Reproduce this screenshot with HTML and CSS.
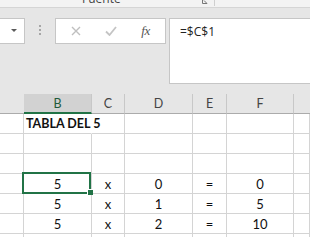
FILE: index.html
```html
<!DOCTYPE html>
<html lang="es">
<head>
<meta charset="utf-8">
<title>Tabla del 5</title>
<link rel="stylesheet" href="styles.css">
</head>
<body>
<div class="ribbon">
  <span class="group-label">Fuente</span>
  <svg class="launcher" width="7" height="5" viewBox="0 0 7 5"><path d="M0.5 0v4.5h4.5" fill="none" stroke="#777" stroke-width="1"/><path d="M2 1.5l3 3" stroke="#777" stroke-width="1"/></svg>
  <span class="rsep"></span>
</div>
<div class="fbar">
  <div class="namebox"><span class="arrow"></span></div>
  <div class="grip"><i></i><i></i><i></i></div>
  <div class="buttons">
    <span class="slot"><svg width="10" height="10" viewBox="0 0 10 10"><path d="M1 1l8 8M9 1l-8 8" stroke="#bfbfbf" stroke-width="1.4" fill="none"/></svg></span>
    <span class="slot"><svg width="12" height="10" viewBox="0 0 12 10"><path d="M1 5.5l3.5 3.5 6.5-8" stroke="#c4c4c4" stroke-width="1.8" fill="none"/></svg></span>
    <span class="slot fx">fx</span>
  </div>
  <div class="formula">=$C$1</div>
</div>
<div class="sheet">
  <div class="hdr">
    <div class="h ha"></div>
    <div class="h hsel">B</div>
    <div class="h">C</div>
    <div class="h">D</div>
    <div class="h">E</div>
    <div class="h">F</div>
    <div class="h hg"></div>
  </div>
  <div class="grid">
    <div class="c"></div><div class="c title">TABLA DEL 5</div><div class="c"></div><div class="c"></div><div class="c"></div><div class="c"></div><div class="c"></div>
    <div class="c"></div><div class="c"></div><div class="c"></div><div class="c"></div><div class="c"></div><div class="c"></div><div class="c"></div>
    <div class="c"></div><div class="c"></div><div class="c"></div><div class="c"></div><div class="c"></div><div class="c"></div><div class="c"></div>
    <div class="c"></div><div class="c sel">5</div><div class="c">x</div><div class="c">0</div><div class="c">=</div><div class="c">0</div><div class="c"></div>
    <div class="c"></div><div class="c">5</div><div class="c">x</div><div class="c">1</div><div class="c">=</div><div class="c">5</div><div class="c"></div>
    <div class="c"></div><div class="c">5</div><div class="c">x</div><div class="c">2</div><div class="c">=</div><div class="c">10</div><div class="c"></div>
    <div class="c"></div><div class="c"></div><div class="c"></div><div class="c"></div><div class="c"></div><div class="c"></div><div class="c"></div>
  </div>
</div>
</body>
</html>
```
FILE: styles.css
```css
body {
  margin: 0;
  width: 310px;
  height: 237px;
  overflow: hidden;
  background: #ffffff;
  font-family: Lato, "Open Sans", sans-serif;
}

.ribbon {
  height: 6px;
  padding-bottom: 1px;
  padding-left: 82px;
  background: #f3f3f3;
  border-bottom: 1px solid #d5d5d5;
  display: flex;
  align-items: flex-end;
  overflow: hidden;
}
.group-label {
  font: 12px/14px "Open Sans", sans-serif;
  color: #444;
  flex-shrink: 0;
}
.launcher {
  flex-shrink: 0;
  margin-left: 81px;
  margin-bottom: 2px;
}
.rsep {
  flex-shrink: 0;
  width: 1px;
  height: 7px;
  margin-left: 5px;
  background: #cfcfcf;
}

.fbar {
  height: 86px;
  box-sizing: border-box;
  padding-top: 10px;
  background: #e6e6e6;
  display: flex;
  align-items: flex-start;
}
.namebox {
  width: 25px;
  height: 26px;
  box-sizing: border-box;
  background: #fff;
  border: 1px solid #c6c6c6;
  border-left: none;
  display: flex;
  align-items: center;
  justify-content: flex-end;
  padding-right: 7px;
}
.arrow {
  width: 0;
  height: 0;
  border-left: 3px solid transparent;
  border-right: 3px solid transparent;
  border-top: 3px solid #5a5a5a;
  margin-top: -1px;
}
.grip {
  width: 30px;
  padding-top: 7px;
  display: flex;
  flex-direction: column;
  align-items: center;
  gap: 2px;
}
.grip i {
  display: block;
  width: 2px;
  height: 2px;
  background: #a6a6a6;
}
.buttons {
  width: 111px;
  height: 26px;
  box-sizing: border-box;
  padding-left: 2px;
  background: #fff;
  border: 1px solid #c6c6c6;
  display: flex;
  align-items: center;
}
.slot {
  width: 35px;
  display: flex;
  justify-content: center;
  align-items: center;
}
.fx {
  font: italic 13px/16px "Liberation Serif", serif;
  color: #555;
  letter-spacing: -0.5px;
}
.formula {
  flex: 1;
  height: 66px;
  box-sizing: border-box;
  margin-left: 3px;
  padding: 5px 0 0 10px;
  background: #fff;
  border: 1px solid #c6c6c6;
  border-right: none;
  font: 12px/16px "Open Sans", sans-serif;
  color: #222;
}

.hdr, .grid {
  display: grid;
  grid-template-columns: 24px 68px 33px 68px 34px 67px 1fr;
}
.hdr {
  background: #e6e6e6;
}
.h {
  height: 20px;
  box-sizing: border-box;
  border-right: 1px solid #c8c8c8;
  border-bottom: 1px solid #ababab;
  display: flex;
  align-items: center;
  justify-content: center;
  font-size: 12.5px;
  color: #444;
}
.ha {
  border-right: none;
}
.hg {
  border-right: none;
}
.hsel {
  background: #d2d2d2;
  border-bottom: 2px solid #217346;
  color: #1f5a3a;
  padding-top: 1px;
}

.grid {
  background: #fff;
}
.c {
  height: 20px;
  box-sizing: border-box;
  border-right: 1px solid #d4d4d4;
  border-bottom: 1px solid #d4d4d4;
  display: flex;
  align-items: flex-end;
  justify-content: center;
  padding-bottom: 1px;
  font-size: 13px;
  line-height: 16px;
  color: #111;
  white-space: nowrap;
}
.title {
  justify-content: flex-start;
  padding-left: 2px;
  font-weight: 700;
  font-size: 12.5px;
  border-right-color: transparent;
  overflow: visible;
}
.sel {
  position: relative;
}
.sel::after {
  content: "";
  position: absolute;
  left: -2px;
  top: -2px;
  right: 0;
  bottom: -1px;
  border: 2px solid #217346;
}
.sel::before {
  content: "";
  position: absolute;
  right: -2px;
  bottom: -2px;
  width: 5px;
  height: 5px;
  background: #217346;
  border-left: 1px solid #fff;
  border-top: 1px solid #fff;
  z-index: 1;
}
```
